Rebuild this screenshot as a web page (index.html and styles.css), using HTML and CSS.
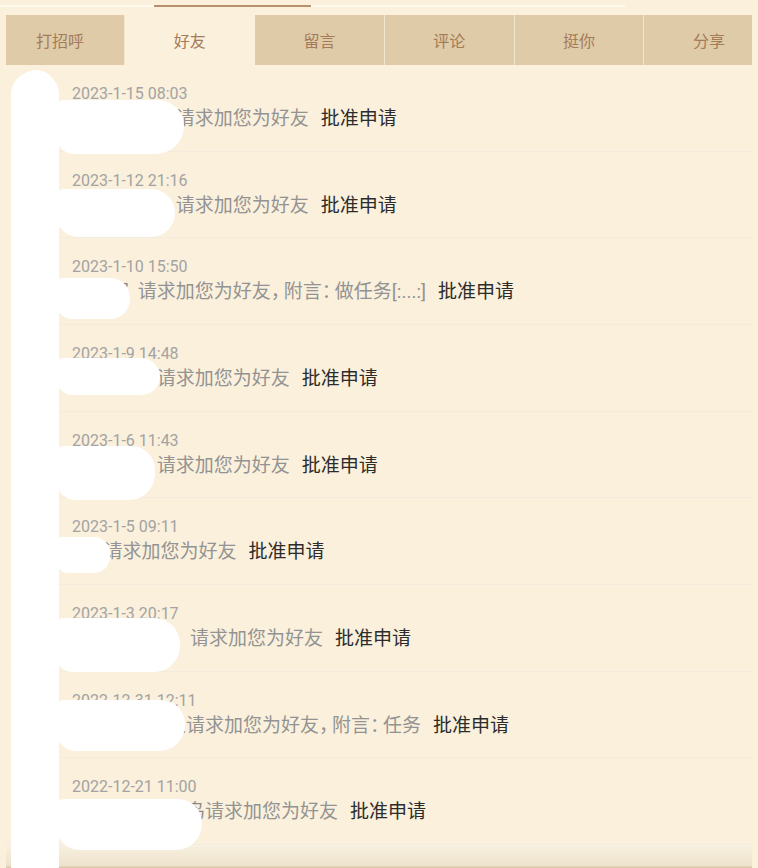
FILE: index.html
```html
<!DOCTYPE html>
<html lang="zh-CN">
<head>
<meta charset="utf-8">
<title>好友</title>
<link rel="stylesheet" href="styles.css">
</head>
<body>
<div class="page">
  <div class="topbar">
    <div class="topline"><div class="indicator"></div></div>
  </div>
  <div class="tabs-wrap">
    <div class="tabs">
      <div class="tab">打招呼</div>
      <div class="tab active">好友</div>
      <div class="tab">留言</div>
      <div class="tab">评论</div>
      <div class="tab">挺你</div>
      <div class="tab">分享</div>
    </div>
  </div>
  <div class="list">
    <div class="row">
      <div class="time">2023-1-15 08:03</div>
      <div class="msg"><span class="name">清风明月夜 </span>请求加您为好友<span class="act">批准申请</span></div>
    </div>
    <div class="row">
      <div class="time">2023-1-12 21:16</div>
      <div class="msg"><span class="name">快乐每一天 </span>请求加您为好友<span class="act">批准申请</span></div>
    </div>
    <div class="row">
      <div class="time">2023-1-10 15:50</div>
      <div class="msg"><span class="name">小星客 </span>请求加您为好友<span class="p">，</span>附言<span class="p">：</span>做任务[:...:]<span class="act">批准申请</span></div>
    </div>
    <div class="row">
      <div class="time">2023-1-9 14:48</div>
      <div class="msg"><span class="name">阳光男孩 </span>请求加您为好友<span class="act">批准申请</span></div>
    </div>
    <div class="row">
      <div class="time">2023-1-6 11:43</div>
      <div class="msg"><span class="name">梦里花刂 </span>请求加您为好友<span class="act">批准申请</span></div>
    </div>
    <div class="row">
      <div class="time">2023-1-5 09:11</div>
      <div class="msg"><span class="name tight">小A</span>请求加您为好友<span class="act">批准申请</span></div>
    </div>
    <div class="row">
      <div class="time">2023-1-3 20:17</div>
      <div class="msg"><span class="name">风之子月光、</span>请求加您为好友<span class="act">批准申请</span></div>
    </div>
    <div class="row">
      <div class="time">2022-12-31 12:11</div>
      <div class="msg"><span class="name tight">一叶知秋的人</span>请求加您为好友<span class="p">，</span>附言<span class="p">：</span>任务<span class="act">批准申请</span></div>
    </div>
    <div class="row">
      <div class="time">2022-12-21 11:00</div>
      <div class="msg"><span class="name tight">我是一只小小鸟</span>请求加您为好友<span class="act">批准申请</span></div>
    </div>
  </div>
  <div class="bottom"></div>

  <div class="mask m-col"></div>
  <div class="mask m-top"></div>
  <div class="mask m1"></div>
  <div class="mask m2"></div>
  <div class="mask m3"></div>
  <div class="mask m4"></div>
  <div class="mask m5"></div>
  <div class="mask m6"></div>
  <div class="mask m7"></div>
  <div class="mask m8"></div>
  <div class="mask m9"></div>
</div>
</body>
</html>
```

FILE: styles.css
```css
* { box-sizing: border-box; }
html, body {
  margin: 0;
  padding: 0;
  background: #faf0dc;
}
body {
  font-family: Roboto, "Noto Sans CJK SC", sans-serif;
  width: 758px;
  height: 868px;
  overflow: hidden;
}
.page {
  position: relative;
  width: 758px;
  height: 868px;
  overflow: hidden;
}
.topbar {
  height: 15px;
  padding-top: 5px;
}
.topline {
  width: 625px;
  height: 2px;
  background: #fffaf0;
  position: relative;
}
.indicator {
  position: absolute;
  left: 154px;
  top: 0;
  width: 157px;
  height: 2px;
  background: #b88f6c;
}
.tabs-wrap {
  margin: 0 6px;
  height: 50px;
  overflow: hidden;
}
.tabs {
  display: flex;
  margin-left: -10.5px;
  height: 50px;
}
.tab {
  flex: 0 0 129.8px;
  height: 50px;
  background: #dfcba8;
  border-right: 1px solid #f2e6cf;
  display: flex;
  align-items: center;
  justify-content: center;
  font-family: "Noto Sans CJK SC", sans-serif;
  font-size: 16px;
  color: #a47c5a;
}
.tab.active {
  background: #faf0dc;
  border-right-color: #faf0dc;
}
.list {
  margin: 0 6px;
}
.row {
  height: 86.67px;
  border-bottom: 1px solid #f3ebdd;
  padding: 19px 0 0 66px;
}
.time {
  font-family: Roboto, sans-serif;
  font-size: 16px;
  line-height: 20px;
  color: #a3a3a3;
}
.msg {
  margin-top: 2px;
  font-family: Roboto, "Noto Sans CJK SC", sans-serif;
  font-size: 19px;
  line-height: 26px;
  color: #939393;
  white-space: nowrap;
}
.name {
  color: #8a8a8a;
  margin-right: 4px;
}
.name.tight {
  margin-right: 0;
}
.p {
  letter-spacing: -6px;
  margin-right: 0;
}
.act {
  margin-left: 12px;
  color: #2c2c2c;
}
.bottom {
  height: 23px;
  margin: 0 6px;
  background: linear-gradient(to bottom, #f7f1e3 0px, #f5ecda 6px, #ece2cd 21px, #dcc8a9 22px);
}
.mask {
  position: absolute;
  background: #ffffff;
}
.m-col {
  left: 11px;
  top: 72px;
  width: 48px;
  height: 800px;
  border-radius: 22px 22px 6px 6px;
}
.m-top {
  left: 16px;
  top: 70px;
  width: 40px;
  height: 40px;
  border-radius: 50%;
}
.m1 { left: 56px; top: 100px; width: 128px; height: 54px; border-radius: 8px 26px 28px 18px; }
.m2 { left: 56px; top: 189px; width: 119px; height: 48px; border-radius: 8px 24px 24px 22px; }
.m3 { left: 56px; top: 278px; width: 74px; height: 41px; border-radius: 6px 20px 20px 16px; }
.m4 { left: 56px; top: 358px; width: 104px; height: 37px; border-radius: 8px 20px 20px 18px; }
.m5 { left: 56px; top: 446px; width: 99px; height: 54px; border-radius: 8px 24px 26px 20px; }
.m6 { left: 56px; top: 537px; width: 54px; height: 36px; border-radius: 6px 16px 16px 12px; }
.m7 { left: 56px; top: 618px; width: 124px; height: 54px; border-radius: 8px 26px 26px 16px; }
.m8 { left: 56px; top: 700px; width: 129px; height: 51px; border-radius: 8px 24px 26px 20px; }
.m9 { left: 56px; top: 799px; width: 146px; height: 51px; border-radius: 8px 24px 26px 24px; }
```
